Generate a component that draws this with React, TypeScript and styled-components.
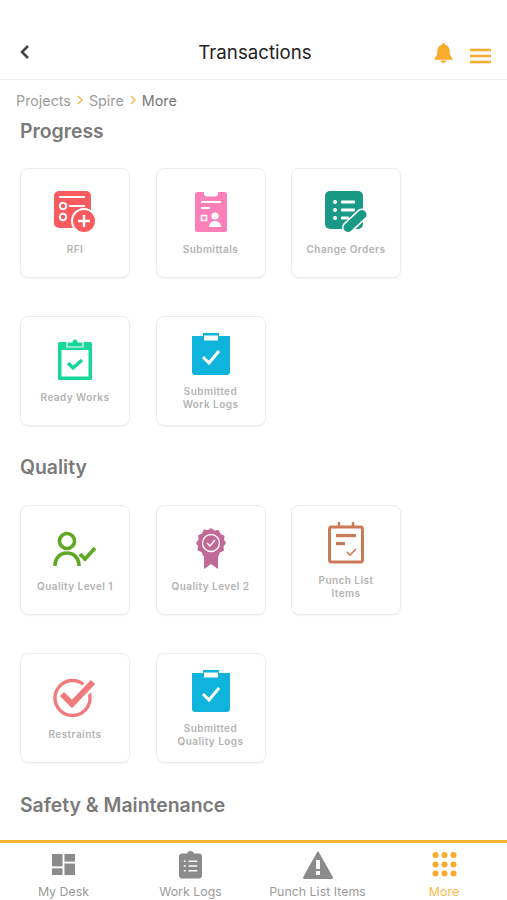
import React from "react";
import styled, { createGlobalStyle } from "styled-components";

const GlobalStyle = createGlobalStyle`
  html, body {
    margin: 0;
    padding: 0;
    background: #fff;
    font-family: Inter, "Liberation Sans", sans-serif;
  }
`;

const Page = styled.div`
  width: 507px;
  height: 900px;
  display: flex;
  flex-direction: column;
  overflow: hidden;
  background: #fff;
`;

const Header = styled.header`
  height: 80px;
  box-sizing: border-box;
  flex: none;
  padding: 34px 16px 0 19px;
  display: grid;
  grid-template-columns: 90px 1fr 90px;
  align-items: start;
  border-bottom: 1px solid #f1f1f1;
`;

const BackButton = styled.div`
  height: 36px;
  display: flex;
  align-items: center;
`;

const Title = styled.div`
  height: 38px;
  line-height: 38px;
  text-align: center;
  font-size: 18.7px;
  color: #222;
`;

const HeaderActions = styled.div`
  display: flex;
  justify-content: flex-end;
  align-items: center;
  gap: 17px;
  height: 40px;
`;

const BellSlot = styled.div`
  display: flex;
  margin-top: -2px;
`;

const MenuSlot = styled.div`
  display: flex;
  margin-top: 3px;
`;

const Content = styled.main`
  flex: 1;
  min-height: 0;
  overflow: hidden;
  padding: 11px 0 0 20px;
`;

const Crumbs = styled.div`
  display: flex;
  align-items: center;
  gap: 6px;
  margin-left: -4px;
  height: 18px;
  font-size: 14.3px;
  color: #9a9a9a;
`;

const Crumb = styled.span<{ $current?: boolean }>`
  color: ${(p) => (p.$current ? "#777" : "#9c9c9c")};
`;

const SectionTitle = styled.h2`
  margin: 0;
  height: 24px;
  line-height: 24px;
  font-size: 19.4px;
  font-weight: 600;
  color: #7a7a7a;
`;

const Section = styled.section<{ $top: number }>`
  margin-top: ${(p) => p.$top}px;
`;

const CardGrid = styled.div<{ $offset: number }>`
  display: grid;
  grid-template-columns: repeat(3, 110px);
  column-gap: 25.5px;
  row-gap: 38px;
  margin-top: ${(p) => p.$offset}px;
`;

const Card = styled.div`
  height: 110px;
  box-sizing: border-box;
  border: 1px solid #ececec;
  border-radius: 8px;
  box-shadow: 0 1px 2px rgba(0, 0, 0, 0.04);
  background: #fff;
  display: flex;
  flex-direction: column;
  align-items: center;
  justify-content: center;
  gap: 10px;
`;

const IconSlot = styled.div`
  height: 43px;
  display: flex;
  align-items: center;
  justify-content: center;
`;

const CardLabel = styled.div`
  font-size: 10px;
  line-height: 12.5px;
  font-weight: 600;
  letter-spacing: 0.45px;
  text-align: center;
  color: #b3b3b3;
`;

const TabBar = styled.nav`
  flex: none;
  height: 60px;
  box-sizing: border-box;
  border-top: 3px solid #f9b233;
  display: grid;
  grid-template-columns: 127px 127px 127px 126px;
  background: #fff;
`;

const Tab = styled.div<{ $active?: boolean }>`
  display: flex;
  flex-direction: column;
  align-items: center;
  padding-top: 7px;
  font-size: 12.3px;
  letter-spacing: 0.05px;
  white-space: nowrap;
  color: ${(p) => (p.$active ? "#f9b84a" : "#9a9a9a")};
`;

const TabIcon = styled.div`
  height: 29px;
  margin-bottom: 5px;
  display: flex;
  align-items: center;
  justify-content: center;
`;

const RfiIcon = () => (
  <svg width="44" height="44" viewBox="0 0 44 44">
    <rect x="1" y="1" width="37" height="37" rx="5" fill="#fb5a5f" />
    <rect x="6" y="6" width="26" height="2" fill="#fff" />
    <circle cx="10" cy="16" r="3.2" fill="none" stroke="#fff" strokeWidth="2" />
    <circle cx="10" cy="27" r="3.2" fill="none" stroke="#fff" strokeWidth="2" />
    <rect x="16" y="15" width="16" height="2" fill="#fff" />
    <circle cx="31" cy="31" r="12" fill="#fb5a5f" stroke="#fff" strokeWidth="2" />
    <path d="M31 25v12M25 31h12" stroke="#fff" strokeWidth="2.4" />
  </svg>
);

const SubmittalsIcon = () => (
  <svg width="32" height="42" viewBox="0 0 32 42">
    <path
      d="M2 1h7v1.5c0 2 1 3 3 3h8c2 0 3-1 3-3V1h7c1 0 2 1 2 2v36c0 1-1 2-2 2H2c-1 0-2-1-2-2V3c0-1 1-2 2-2z"
      fill="#fc7fba"
    />
    <rect x="6" y="10" width="20" height="2" fill="#fff" />
    <rect x="6" y="16" width="9" height="2" fill="#fff" />
    <rect x="6.5" y="24.5" width="5" height="5" fill="none" stroke="#fff" strokeWidth="1.6" />
    <circle cx="20" cy="25" r="3.6" fill="#fff" />
    <path d="M14 36c0-4 3-6 6-6s6 2 6 6z" fill="#fff" />
  </svg>
);

const ChangeOrdersIcon = () => (
  <svg width="44" height="44" viewBox="0 0 44 44">
    <rect x="1" y="1" width="38" height="38" rx="5" fill="#1a9a86" />
    <circle cx="11" cy="12" r="2" fill="#fff" />
    <circle cx="11" cy="20" r="2" fill="#fff" />
    <circle cx="11" cy="28" r="2" fill="#fff" />
    <rect x="17" y="10.5" width="14" height="3" rx="1" fill="#fff" />
    <rect x="17" y="18.5" width="14" height="3" rx="1" fill="#fff" />
    <rect x="17" y="26.5" width="8" height="3" rx="1" fill="#fff" />
    <path d="M24 37.500L38 24.500" stroke="#fff" strokeWidth="12" strokeLinecap="round" />
    <path d="M24 37.500L38 24.500" stroke="#1a9a86" strokeWidth="9" strokeLinecap="round" />
  </svg>
);

const ReadyWorksIcon = () => (
  <svg width="34" height="42" viewBox="0 0 34 42">
    <rect x="0" y="3" width="34" height="38" rx="1.500" fill="#17d69a" />
    <rect x="3.500" y="11" width="27" height="26.500" fill="#fff" />
    <path d="M9 3h5c0-4 6-4 6 0h5v5H9z" fill="#17d69a" stroke="#fff" strokeWidth="1.200" />
    <path d="M10 24l5 5 9-8" fill="none" stroke="#17d69a" strokeWidth="3.400" />
  </svg>
);

const SubmittedIcon = () => (
  <svg width="38" height="42" viewBox="0 0 38 42">
    <path
      d="M0 3h11V0h16v3h11v36c0 1.600-1.400 3-3 3H3c-1.600 0-3-1.400-3-3z"
      fill="#0fb4dc"
    />
    <rect x="12" y="2.500" width="14" height="5" fill="#fff" />
    <path d="M11 24l6 6 10-12" fill="none" stroke="#fff" strokeWidth="3" />
  </svg>
);

const QualityOneIcon = () => (
  <svg width="44" height="38" viewBox="0 0 44 38">
    <circle cx="14" cy="11" r="7.500" fill="none" stroke="#5fa824" strokeWidth="3.600" />
    <path d="M2 36c0-8 5-13 12-13s12 5 12 13" fill="none" stroke="#5fa824" strokeWidth="3.600" />
    <path d="M27 24l5 5 10-11" fill="none" stroke="#5fa824" strokeWidth="3.800" />
  </svg>
);

const QualityTwoIcon = () => (
  <svg width="30" height="42" viewBox="0 0 30 42">
    <path d="M8 22h14v19l-7-5-7 5z" fill="#c26a97" />
    <path
      d="M15 0l3.500 2.500 4.300-.4 1.800 3.900 3.900 1.800-.4 4.300L30 15l-2.500 3.500.4 4.300-3.900 1.800-1.800 3.900-4.300-.4L15 30l-3.500-2.500-4.300.4-1.800-3.900-3.900-1.800.4-4.300L0 15l2.500-3.500-.4-4.300 3.900-1.800 1.800-3.900 4.300.4z"
      fill="#c26a97"
    />
    <circle cx="15" cy="15" r="8.500" fill="none" stroke="#fff" strokeWidth="1.300" />
    <path d="M11 15l3 3 5-6" fill="none" stroke="#fff" strokeWidth="1.400" />
  </svg>
);

const PunchListIcon = () => (
  <svg width="36" height="42" viewBox="0 0 36 42">
    <rect x="1.500" y="5" width="33" height="35" rx="2" fill="none" stroke="#cb7a58" strokeWidth="3" />
    <path d="M11 0v6M25 0v6" stroke="#cb7a58" strokeWidth="2.400" />
    <rect x="8" y="12" width="20" height="3.200" fill="#cb7a58" />
    <rect x="8" y="20" width="9" height="3.200" fill="#cb7a58" />
    <path d="M19 30l3 3 6-6" fill="none" stroke="#cb7a58" strokeWidth="1.600" />
  </svg>
);

const RestraintsIcon = () => (
  <svg width="44" height="40" viewBox="0 0 44 40">
    <circle cx="19.500" cy="21" r="17.500" fill="none" stroke="#f17a7c" strokeWidth="3.400" />
    <path d="M9 17l10 10L40 5" fill="none" stroke="#fff" strokeWidth="11" />
    <path d="M9 17l10 10L40 5" fill="none" stroke="#f17a7c" strokeWidth="6" />
  </svg>
);

const BellIcon = () => (
  <svg width="19" height="20" viewBox="0 0 20 21">
    <path
      d="M10 0c1 0 1.700.7 1.700 1.700 3 .8 4.800 3.300 4.800 6.600 0 4 .9 6 2.800 7.700.6.500.3 1.500-.5 1.500H1.200c-.8 0-1.100-1-.5-1.500 1.900-1.700 2.800-3.700 2.800-7.700 0-3.300 1.800-5.800 4.800-6.600C8.300.7 9 0 10 0z"
      fill="#f9ab2e"
    />
    <path d="M7 18.500h6c0 1.500-1.300 2.500-3 2.500s-3-1-3-2.500z" fill="#f9ab2e" />
  </svg>
);

const MenuIcon = () => (
  <svg width="21" height="16" viewBox="0 0 21 16">
    <path d="M0 2h21M0 8h21M0 14h21" stroke="#f9ab2e" strokeWidth="2.600" />
  </svg>
);

const DeskIcon = () => (
  <svg width="23" height="23" viewBox="0 0 24 24" fill="#8b8b8b">
    <rect x="0" y="1" width="11" height="13" />
    <rect x="13" y="1" width="11" height="8" />
    <rect x="0" y="16" width="11" height="7" />
    <rect x="13" y="11" width="11" height="12" />
  </svg>
);

const WorkLogsIcon = () => (
  <svg width="23" height="29" viewBox="0 0 24 29">
    <path
      d="M3 3h5.500c0-3.500 7-3.500 7 0H21c1.700 0 3 1.300 3 3v20c0 1.700-1.300 3-3 3H3c-1.700 0-3-1.300-3-3V6c0-1.700 1.300-3 3-3z"
      fill="#8b8b8b"
    />
    <path d="M5 11h2M10 11h9M5 16h2M10 16h9M5 21h2M10 21h9" stroke="#fff" strokeWidth="1.600" />
  </svg>
);

const PunchTabIcon = () => (
  <svg width="30" height="28" viewBox="0 0 30 28">
    <path
      d="M15 1L29 26c.4.800 0 1.500-1 1.500H2c-1 0-1.400-.7-1-1.500z"
      fill="#8b8b8b"
      stroke="#8b8b8b"
      strokeLinejoin="round"
      strokeWidth="1.500"
    />
    <rect x="13" y="9" width="4" height="9" fill="#fff" />
    <rect x="13" y="20" width="4" height="4" fill="#fff" />
  </svg>
);

const DotsIcon = () => (
  <svg width="25" height="25" viewBox="0 0 25 25" fill="#f9ab2e">
    {[3, 12.500, 21.500].flatMap((cy) =>
      [3.500, 12.500, 21.500].map((cx) => (
        <circle key={`${cx}-${cy}`} cx={cx} cy={cy} r="3" />
      ))
    )}
  </svg>
);

const Chevron = () => (
  <svg width="6" height="10" viewBox="0 0 6 10">
    <path d="M1 1l4 4-4 4" fill="none" stroke="#f9b84a" strokeWidth="1.500" />
  </svg>
);

const progress = [
  { label: ["RFI"], icon: <RfiIcon /> },
  { label: ["Submittals"], icon: <SubmittalsIcon /> },
  { label: ["Change Orders"], icon: <ChangeOrdersIcon /> },
  { label: ["Ready Works"], icon: <ReadyWorksIcon /> },
  { label: ["Submitted", "Work Logs"], icon: <SubmittedIcon /> },
];

const quality = [
  { label: ["Quality Level 1"], icon: <QualityOneIcon /> },
  { label: ["Quality Level 2"], icon: <QualityTwoIcon /> },
  { label: ["Punch List", "Items"], icon: <PunchListIcon /> },
  { label: ["Restraints"], icon: <RestraintsIcon /> },
  { label: ["Submitted", "Quality Logs"], icon: <SubmittedIcon /> },
];

const tabs = [
  { label: "My Desk", icon: <DeskIcon /> },
  { label: "Work Logs", icon: <WorkLogsIcon /> },
  { label: "Punch List Items", icon: <PunchTabIcon /> },
  { label: "More", icon: <DotsIcon />, active: true },
];

const Cards = ({ items, offset }: { items: typeof progress; offset: number }) => (
  <CardGrid $offset={offset}>
    {items.map((item, i) => (
      <Card key={i}>
        <IconSlot>{item.icon}</IconSlot>
        <CardLabel>
          {item.label.map((line) => (
            <div key={line}>{line}</div>
          ))}
        </CardLabel>
      </Card>
    ))}
  </CardGrid>
);

const App = () => (
  <Page>
    <GlobalStyle />
    <Header>
      <BackButton>
        <svg width="12" height="16" viewBox="0 0 12 16">
          <path d="M9 2L3 8l6 6" fill="none" stroke="#444" strokeWidth="2.600" />
        </svg>
      </BackButton>
      <Title>Transactions</Title>
      <HeaderActions>
        <BellSlot>
          <BellIcon />
        </BellSlot>
        <MenuSlot>
          <MenuIcon />
        </MenuSlot>
      </HeaderActions>
    </Header>
    <Content>
      <Crumbs>
        <Crumb>Projects</Crumb>
        <Chevron />
        <Crumb>Spire</Crumb>
        <Chevron />
        <Crumb $current>More</Crumb>
      </Crumbs>
      <Section $top={10}>
        <SectionTitle>Progress</SectionTitle>
        <Cards items={progress} offset={25} />
      </Section>
      <Section $top={29}>
        <SectionTitle>Quality</SectionTitle>
        <Cards items={quality} offset={26} />
      </Section>
      <Section $top={30}>
        <SectionTitle>Safety &amp; Maintenance</SectionTitle>
      </Section>
    </Content>
    <TabBar>
      {tabs.map((tab) => (
        <Tab key={tab.label} $active={tab.active}>
          <TabIcon>{tab.icon}</TabIcon>
          {tab.label}
        </Tab>
      ))}
    </TabBar>
  </Page>
);

export default App;
